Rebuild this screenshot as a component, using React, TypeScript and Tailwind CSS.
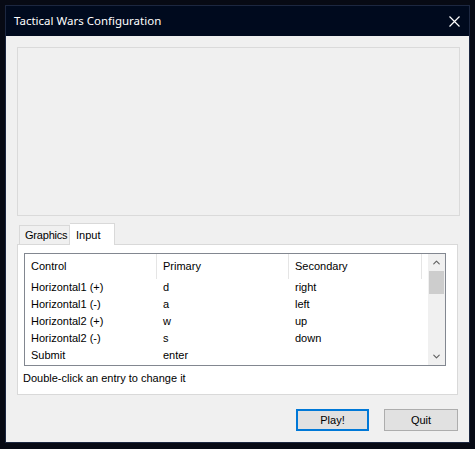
import { ChevronUp, ChevronDown } from 'lucide-react';

const rows = [
  ['Horizontal1 (+)', 'd', 'right'],
  ['Horizontal1 (-)', 'a', 'left'],
  ['Horizontal2 (+)', 'w', 'up'],
  ['Horizontal2 (-)', 's', 'down'],
  ['Submit', 'enter', ''],
];

export default function App() {
  return (
    <div
      className="w-[475px] h-[449px] overflow-hidden bg-[#070a14] pt-[5px] pl-[5px]"
      style={{ fontFamily: '"Liberation Sans", Arial, sans-serif' }}
    >
      <div className="w-[465px] h-[438px] border border-[#1c2740] flex flex-col">
        {/* title bar */}
        <div className="h-[30px] bg-[#000a1e] flex items-center justify-between pl-[8px] pr-[9px]">
          <span className="text-[11.5px] text-white" style={{ fontFamily: '"Noto Sans", sans-serif' }}>
            Tactical Wars Configuration
          </span>
          <svg width="11" height="11" viewBox="0 0 11 11" className="mt-[1px]">
            <path d="M0.5 0.5 L10.5 10.5 M10.5 0.5 L0.5 10.5" stroke="white" strokeWidth="1.2" />
          </svg>
        </div>

        {/* client */}
        <div className="flex-1 bg-[#f0f0f0] pt-[11px] pl-[11px] text-[11px] text-black">
          <div className="w-[443px] h-[169px] border border-[#dadada]" />

          {/* tabs */}
          <div className="mt-[7px] flex items-end pl-[2px] h-[21px]">
            <div className="w-[51px] h-[19px] pl-[5px] flex items-center border border-b-0 border-[#d9d9d9] bg-[#f0f0f0] tracking-[-0.2px]">
              Graphics
            </div>
            <div className="w-[45px] h-[22px] -mb-px pl-[6px] flex items-start pt-[3px] border border-b-0 border-l-0 border-[#d9d9d9] bg-white relative z-10">
              Input
            </div>
          </div>

          <div className="w-[441px] h-[151px] border border-[#d9d9d9] bg-white pt-[8px] pl-[6px]">
            {/* list view */}
            <div className="w-[422px] h-[113px] border border-[#828790] flex">
              <div className="flex-1 flex flex-col">
                <div className="h-[25px] flex">
                  <div className="w-[132px] pl-[6px] flex items-center border-r border-[#e5e5e5]">Control</div>
                  <div className="w-[132px] pl-[6px] flex items-center border-r border-[#e5e5e5]">Primary</div>
                  <div className="w-[133px] pl-[6px] flex items-center border-r border-[#e5e5e5]">Secondary</div>
                </div>
                <div>
                  {rows.map((r) => (
                    <div key={r[0]} className="h-[17px] flex items-center">
                      <div className="w-[132px] pl-[6px]">{r[0]}</div>
                      <div className="w-[132px] pl-[6px]">{r[1]}</div>
                      <div className="w-[133px] pl-[6px]">{r[2]}</div>
                    </div>
                  ))}
                </div>
              </div>
              {/* scrollbar */}
              <div className="w-[17px] bg-[#f0f0f0] flex flex-col items-center">
                <div className="h-[17px] w-full flex items-center justify-center">
                  <ChevronUp className="w-[11px] h-[11px] text-[#606060]" strokeWidth={2.5} />
                </div>
                <div className="w-[15px] h-[23px] bg-[#cdcdcd]" />
                <div className="flex-1" />
                <div className="h-[17px] w-full flex items-center justify-center">
                  <ChevronDown className="w-[11px] h-[11px] text-[#606060]" strokeWidth={2.5} />
                </div>
              </div>
            </div>
            <div className="mt-[4px] -ml-px">Double-click an entry to change it</div>
          </div>

          {/* buttons */}
          <div className="mt-[14px] flex justify-end gap-[15px] pr-[11px]">
            <button className="w-[73px] h-[22px] border-2 border-[#0078d7] bg-[#e1e1e1] text-[11px]">
              Play!
            </button>
            <button className="w-[74px] h-[22px] border border-[#adadad] bg-[#e1e1e1] text-[11px]">
              Quit
            </button>
          </div>
        </div>
      </div>
    </div>
  );
}
